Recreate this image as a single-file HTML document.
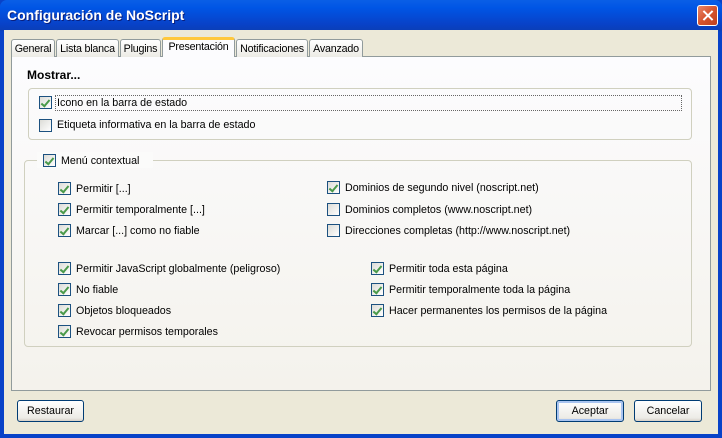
<!DOCTYPE html>
<html><head><meta charset="utf-8"><style>
*{margin:0;padding:0;box-sizing:border-box}
body{width:722px;height:438px;overflow:hidden;font-family:"Liberation Sans",sans-serif;font-size:10.7px;color:#000;position:relative;background:#0842c8}
.win{position:absolute;left:0;top:0;width:722px;height:438px;background:linear-gradient(#0a5fe6,#0055e5 8px,#0842c8 24px,#0a3fb8 30px,#0842c8 32px);border-radius:7px 7px 0 0}
.body{position:absolute;left:4px;top:30px;width:714px;height:404px;background:#ECE9D8}
.title{position:absolute;left:7px;top:7px;color:#fff;font-weight:bold;font-size:14px;text-shadow:1px 1px #0a1e7a}
.close{position:absolute;left:697px;top:5px;width:21px;height:21px;border:1px solid #fff;border-radius:3px;background:linear-gradient(135deg,#e8876a,#d6542e 50%,#c0401e)}
.close:before,.close:after{content:"";position:absolute;left:9px;top:3px;width:2px;height:13px;background:#fff;transform:rotate(45deg)}
.close:after{transform:rotate(-45deg)}
.a{position:absolute;white-space:nowrap}
.panel{position:absolute;left:11px;top:56px;width:700px;height:335px;border:1px solid #919b9c;background:linear-gradient(#fcfcfe,#f4f2ec)}
.tab{position:absolute;top:39px;height:18px;border:1px solid #919b9c;border-bottom:none;border-radius:3px 3px 0 0;background:linear-gradient(#fff,#ecebe5);padding-top:3px;text-align:center;white-space:nowrap;overflow:hidden;letter-spacing:-0.2px}
.tab.sel{top:37px;height:20px;background:#fcfcfe;border-top:3px solid #ffc83c;padding-top:1px}
.grp{position:absolute;border:1px solid #d0d0bf;border-radius:4px}
.cb{position:absolute;width:13px;height:13px;border:1px solid #1c5180;background:linear-gradient(135deg,#dcdcd7,#fff)}
.cb.c:after{content:"";position:absolute;left:3px;top:1px;width:3px;height:7px;border:solid #4a9a4a;border-width:0 2px 2px 0;transform:rotate(40deg)}
.btn{position:absolute;top:400px;height:22px;border:1px solid #003c74;border-radius:3px;background:linear-gradient(#fff,#ecebe6 85%,#d6d0c5);text-align:center;line-height:20px}
</style></head><body>
<div class="win"></div>
<div class="body"></div>
<div class="title">Configuración de NoScript</div>
<div class="close"></div>
<div class="panel"></div>
<div class="tab" style="left:11px;width:44px">General</div>
<div class="tab" style="left:56px;width:63px">Lista blanca</div>
<div class="tab" style="left:120px;width:41px">Plugins</div>
<div class="tab" style="left:236px;width:72px">Notificaciones</div>
<div class="tab" style="left:309px;width:54px">Avanzado</div>
<div class="tab sel" style="left:162px;width:73px">Presentación</div>

<div class="a" style="left:27px;top:68px;font-weight:bold;font-size:12px">Mostrar...</div>
<div class="grp" style="left:28px;top:88px;width:664px;height:52px"></div>
<div class="a" style="left:55px;top:95px;width:627px;height:16px;border:1px dotted #666"></div>
<div class="cb c" style="left:39px;top:96px"></div><div class="a" style="left:57px;top:97px">Icono en la barra de estado</div>
<div class="cb" style="left:39px;top:119px"></div><div class="a" style="left:57px;top:119px">Etiqueta informativa en la barra de estado</div>

<div class="grp" style="left:24px;top:160px;width:668px;height:187px"></div>
<div class="a" style="left:37px;top:152px;width:116px;height:16px;background:#fbfbfa"></div>
<div class="cb c" style="left:43px;top:154px"></div><div class="a" style="left:61px;top:155px">Menú contextual</div>

<div class="cb c" style="left:58px;top:182px"></div><div class="a" style="left:76px;top:183px">Permitir [...]</div>
<div class="cb c" style="left:58px;top:203px"></div><div class="a" style="left:76px;top:204px">Permitir temporalmente [...]</div>
<div class="cb c" style="left:58px;top:224px"></div><div class="a" style="left:76px;top:225px">Marcar [...] como no fiable</div>

<div class="cb c" style="left:327px;top:181px"></div><div class="a" style="left:345px;top:182px">Dominios de segundo nivel (noscript.net)</div>
<div class="cb" style="left:327px;top:203px"></div><div class="a" style="left:345px;top:204px">Dominios completos (www.noscript.net)</div>
<div class="cb" style="left:327px;top:224px"></div><div class="a" style="left:345px;top:225px">Direcciones completas (http://www.noscript.net)</div>

<div class="cb c" style="left:58px;top:262px"></div><div class="a" style="left:76px;top:263px">Permitir JavaScript globalmente (peligroso)</div>
<div class="cb c" style="left:58px;top:283px"></div><div class="a" style="left:76px;top:284px">No fiable</div>
<div class="cb c" style="left:58px;top:304px"></div><div class="a" style="left:76px;top:305px">Objetos bloqueados</div>
<div class="cb c" style="left:58px;top:325px"></div><div class="a" style="left:76px;top:326px">Revocar permisos temporales</div>

<div class="cb c" style="left:371px;top:262px"></div><div class="a" style="left:389px;top:263px">Permitir toda esta página</div>
<div class="cb c" style="left:371px;top:283px"></div><div class="a" style="left:389px;top:284px">Permitir temporalmente toda la página</div>
<div class="cb c" style="left:371px;top:304px"></div><div class="a" style="left:389px;top:305px">Hacer permanentes los permisos de la página</div>

<div class="btn" style="left:17px;width:67px">Restaurar</div>
<div class="btn" style="left:556px;width:68px;box-shadow:inset 0 0 0 2px #a9c4f0">Aceptar</div>
<div class="btn" style="left:634px;width:68px">Cancelar</div>
</body></html>
